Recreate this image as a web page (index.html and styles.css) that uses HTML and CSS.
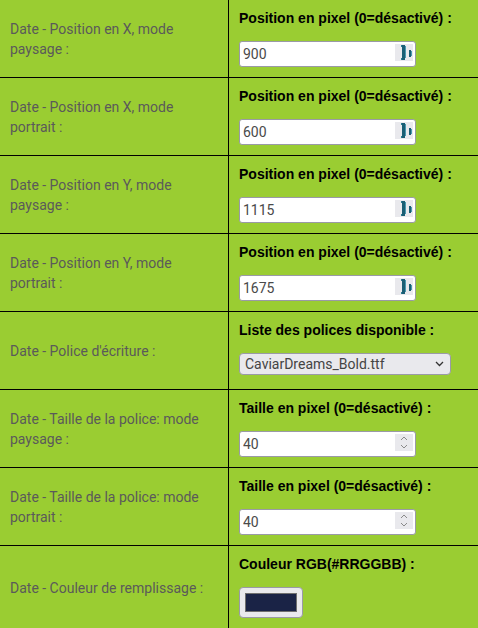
FILE: index.html
```html
<!DOCTYPE html>
<html lang="fr">
<head>
<meta charset="utf-8">
<title>Réglages date</title>
<link rel="stylesheet" href="styles.css">
</head>
<body>
<main class="form">
  <div class="cell label">Date - Position en X, mode paysage :</div>
  <div class="cell field">
    <div class="title">Position en pixel (0=désactivé) :</div>
    <div class="num"><input type="text" value="900"><span class="spin"><svg width="18" height="17" viewBox="0 0 18 17"><rect x="6" y="1" width="1" height="2" fill="#2b7d95"/><rect x="7" y="1" width="3" height="15" fill="#1b5e74"/><rect x="6" y="14" width="1" height="2" fill="#2b7d95"/><rect x="10" y="2" width="1" height="12" fill="#4a9ab0"/><rect x="14" y="6" width="2" height="7" fill="#1b5e74"/><rect x="16" y="7" width="1" height="5" fill="#4a9ab0"/></svg></span></div>
  </div>

  <div class="cell label">Date - Position en X, mode portrait :</div>
  <div class="cell field">
    <div class="title">Position en pixel (0=désactivé) :</div>
    <div class="num"><input type="text" value="600"><span class="spin"><svg width="18" height="17" viewBox="0 0 18 17"><rect x="6" y="1" width="1" height="2" fill="#2b7d95"/><rect x="7" y="1" width="3" height="15" fill="#1b5e74"/><rect x="6" y="14" width="1" height="2" fill="#2b7d95"/><rect x="10" y="2" width="1" height="12" fill="#4a9ab0"/><rect x="14" y="6" width="2" height="7" fill="#1b5e74"/><rect x="16" y="7" width="1" height="5" fill="#4a9ab0"/></svg></span></div>
  </div>

  <div class="cell label">Date - Position en Y, mode paysage :</div>
  <div class="cell field">
    <div class="title">Position en pixel (0=désactivé) :</div>
    <div class="num"><input type="text" value="1115"><span class="spin"><svg width="18" height="17" viewBox="0 0 18 17"><rect x="6" y="1" width="1" height="2" fill="#2b7d95"/><rect x="7" y="1" width="3" height="15" fill="#1b5e74"/><rect x="6" y="14" width="1" height="2" fill="#2b7d95"/><rect x="10" y="2" width="1" height="12" fill="#4a9ab0"/><rect x="14" y="6" width="2" height="7" fill="#1b5e74"/><rect x="16" y="7" width="1" height="5" fill="#4a9ab0"/></svg></span></div>
  </div>

  <div class="cell label">Date - Position en Y, mode portrait :</div>
  <div class="cell field">
    <div class="title">Position en pixel (0=désactivé) :</div>
    <div class="num"><input type="text" value="1675"><span class="spin"><svg width="18" height="17" viewBox="0 0 18 17"><rect x="6" y="1" width="1" height="2" fill="#2b7d95"/><rect x="7" y="1" width="3" height="15" fill="#1b5e74"/><rect x="6" y="14" width="1" height="2" fill="#2b7d95"/><rect x="10" y="2" width="1" height="12" fill="#4a9ab0"/><rect x="14" y="6" width="2" height="7" fill="#1b5e74"/><rect x="16" y="7" width="1" height="5" fill="#4a9ab0"/></svg></span></div>
  </div>

  <div class="cell label">Date - Police d'écriture :</div>
  <div class="cell field">
    <div class="title">Liste des polices disponible :</div>
    <div class="select"><select><option>CaviarDreams_Bold.ttf</option></select><svg class="chev" width="9" height="6" viewBox="0 0 9 6"><path d="M1 1 L4.5 4.5 L8 1" fill="none" stroke="#333" stroke-width="1.3"/></svg></div>
  </div>

  <div class="cell label">Date - Taille de la police: mode paysage :</div>
  <div class="cell field">
    <div class="title">Taille en pixel (0=désactivé) :</div>
    <div class="num"><input type="text" value="40"><span class="spin"><svg width="18" height="17" viewBox="0 0 18 17"><path d="M6 6 L9 3 L12 6" fill="none" stroke="#8a8a8a" stroke-width="1"/><path d="M6 11 L9 14 L12 11" fill="none" stroke="#8a8a8a" stroke-width="1"/></svg></span></div>
  </div>

  <div class="cell label">Date - Taille de la police: mode portrait :</div>
  <div class="cell field">
    <div class="title">Taille en pixel (0=désactivé) :</div>
    <div class="num"><input type="text" value="40"><span class="spin"><svg width="18" height="17" viewBox="0 0 18 17"><path d="M6 6 L9 3 L12 6" fill="none" stroke="#8a8a8a" stroke-width="1"/><path d="M6 11 L9 14 L12 11" fill="none" stroke="#8a8a8a" stroke-width="1"/></svg></span></div>
  </div>

  <div class="cell label last">Date - Couleur de remplissage :</div>
  <div class="cell field last">
    <div class="title">Couleur RGB(#RRGGBB) :</div>
    <button class="color" type="button"><span class="swatch"></span></button>
  </div>
</main>
</body>
</html>
```
FILE: styles.css
```css
html, body {
  margin: 0;
  padding: 0;
  background: #9acd32;
}

.form {
  display: grid;
  grid-template-columns: 229px 1fr;
  font-family: Roboto, "Liberation Sans", sans-serif;
  font-size: 14px;
}

.cell {
  box-sizing: border-box;
  height: 78px;
  border-bottom: 1px solid #000;
}

.cell.last {
  height: 84px;
}

.label {
  display: flex;
  align-items: center;
  padding: 0 10px;
  border-right: 1px solid #000;
  color: #5a5a5a;
  line-height: 20px;
}

.field {
  padding: 8px 10px 0 10px;
}

.title {
  font-family: "Liberation Sans", Arial, sans-serif;
  font-weight: bold;
  color: #000;
  line-height: 20px;
  margin-bottom: 13px;
}

.num {
  box-sizing: border-box;
  width: 177px;
  height: 26px;
  display: flex;
  align-items: flex-start;
  background: #fff;
  border: 1px solid #9a9aa6;
  border-radius: 3px;
}

.num input {
  flex: 1;
  min-width: 0;
  height: 24px;
  border: 0;
  padding: 0 0 0 3px;
  margin: 0;
  background: transparent;
  font-family: Roboto, "Liberation Sans", sans-serif;
  font-size: 14px;
  color: #4a4a4a;
  outline: none;
}

.spin {
  display: block;
  width: 18px;
  height: 17px;
  margin: 2px 2px 0 0;
  background: #e9e9ed;
}

.spin svg {
  display: block;
}

.select {
  position: relative;
  width: 212px;
  margin-top: 2px;
}

.select select {
  box-sizing: border-box;
  width: 212px;
  height: 22px;
  appearance: none;
  -webkit-appearance: none;
  background: #e9e9ed;
  border: 1px solid #9a9aa6;
  border-radius: 4px;
  padding: 0 0 0 5px;
  margin: 0;
  font-family: Roboto, "Liberation Sans", sans-serif;
  font-size: 14px;
  color: #444;
  outline: none;
}

.chev {
  position: absolute;
  right: 7px;
  top: 8px;
}

.color {
  box-sizing: border-box;
  display: block;
  width: 64px;
  height: 31px;
  padding: 5px;
  margin: 0;
  background: #e9e9ed;
  border: 1px solid #9a9aa6;
  border-radius: 4px;
}

.swatch {
  box-sizing: border-box;
  display: block;
  width: 52px;
  height: 19px;
  background: #1a2346;
  border: 1px solid #6f6f6f;
}
```
